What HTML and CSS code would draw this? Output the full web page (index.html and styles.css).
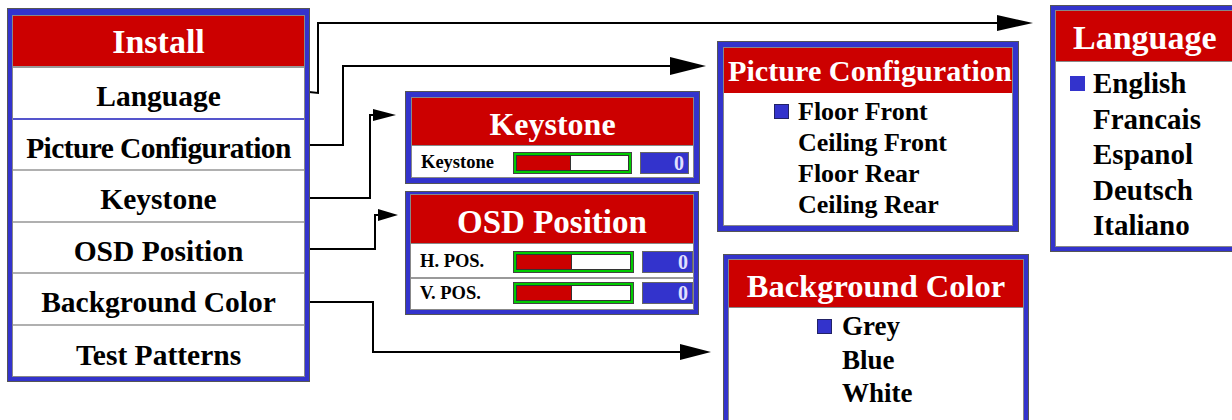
FILE: index.html
```html
<!DOCTYPE html>
<html lang="en">
  <head>
    <meta charset="UTF-8" />
    <title>Install Menu</title>
    <link rel="stylesheet" href="styles.css">
  </head>
  <body>
    <div id="canvas">
      <svg class="wires" width="1232" height="420" viewBox="0 0 1232 420">
        <polyline points="309,92 318,93 318,23 1000,23" />
        <polygon points="997,15 1033,23 997,31" />
        <polyline points="309,145 343,145 343,66 672,66" />
        <polygon points="670,57 706,66 670,75" />
        <polyline points="309,198 370,198 370,115 375,115" />
        <polygon points="373,109 396,115 373,121" />
        <polyline points="309,249 375,249 375,215 380,215" />
        <polygon points="378,209 398,215 378,221" />
        <polyline points="309,302 373,302 373,352 682,352" />
        <polygon points="680,344 711,352 680,360" />
      </svg>

      <!-- main menu -->
      <div class="box install">
        <div class="panel">
          <div class="head">Install</div>
          <div class="item first">Language</div>
          <div class="item tight">Picture Configuration</div>
          <div class="item">Keystone</div>
          <div class="item">OSD Position</div>
          <div class="item">Background Color</div>
          <div class="item last">Test Patterns</div>
        </div>
      </div>

      <div class="box keystone">
        <div class="panel">
          <div class="head">Keystone</div>
          <div class="slider">
            <span class="label">Keystone</span>
            <span class="bar"><span class="track"><span class="fill"></span></span></span>
            <span class="value">0</span>
          </div>
        </div>
      </div>

      <div class="box osd">
        <div class="panel">
          <div class="head">OSD Position</div>
          <div class="slider">
            <span class="label">H. POS.</span>
            <span class="bar"><span class="track"><span class="fill"></span></span></span>
            <span class="value">0</span>
          </div>
          <div class="slider">
            <span class="label">V. POS.</span>
            <span class="bar"><span class="track"><span class="fill"></span></span></span>
            <span class="value">0</span>
          </div>
        </div>
      </div>

      <div class="box picture">
        <div class="panel">
          <div class="head">Picture Configuration</div>
          <ul class="choices">
            <li><span class="mark on"></span>Floor Front</li>
            <li><span class="mark"></span>Ceiling Front</li>
            <li><span class="mark"></span>Floor Rear</li>
            <li><span class="mark"></span>Ceiling Rear</li>
          </ul>
        </div>
      </div>

      <div class="box language">
        <div class="panel">
          <div class="head">Language</div>
          <ul class="choices">
            <li><span class="mark on"></span>English</li>
            <li><span class="mark"></span>Francais</li>
            <li><span class="mark"></span>Espanol</li>
            <li><span class="mark"></span>Deutsch</li>
            <li><span class="mark"></span>Italiano</li>
          </ul>
        </div>
      </div>

      <div class="box background">
        <div class="panel">
          <div class="head">Background Color</div>
          <ul class="choices">
            <li><span class="mark on"></span>Grey</li>
            <li><span class="mark"></span>Blue</li>
            <li><span class="mark"></span>White</li>
          </ul>
        </div>
      </div>
    </div>
  </body>
</html>
```

FILE: styles.css
```css
body {
  margin: 0;
  background: #ffffff;
  font-family: "Liberation Serif", "Times New Roman", serif;
  font-weight: bold;
  color: #000000;
}
#canvas {
  position: relative;
  width: 1232px;
  height: 420px;
  overflow: hidden;
}
.wires {
  position: absolute;
  left: 0;
  top: 0;
}
.wires polyline {
  fill: none;
  stroke: #000000;
  stroke-width: 2;
}
.wires polygon {
  fill: #000000;
}
.box {
  position: absolute;
  box-sizing: border-box;
  border: 4px solid #3333cc;
  box-shadow: 0 0 0 1px #555555;
  background: #3333cc;
}
.panel {
  box-sizing: border-box;
  height: 100%;
  border: 1px solid #888888;
  background: #ffffff;
  display: flex;
  flex-direction: column;
}
.head {
  box-sizing: border-box;
  background: #cc0000;
  color: #ffffff;
  text-align: center;
  border-bottom: 1px solid #888888;
  display: flex;
  align-items: center;
  justify-content: center;
  white-space: nowrap;
  flex-shrink: 0;
  padding-top: 5px;
}

/* install */
.install {
  left: 8px;
  top: 9px;
  width: 301px;
  height: 372px;
  border-width: 6px 4px 4px 4px;
}
.install .head {
  height: 52px;
  font-size: 34px;
  padding-top: 2px;
  border-bottom: 2px solid #999999;
}
.install .item {
  box-sizing: border-box;
  height: 51.5px;
  padding-top: 8px;
  display: flex;
  align-items: center;
  justify-content: center;
  white-space: nowrap;
  font-size: 29.5px;
  border-bottom: 2px solid #b0b0b0;
  flex-shrink: 0;
}
.install .first {
  border-bottom-color: #5555cc;
}
.install .tight {
  letter-spacing: -0.6px;
}
.install .last {
  border-bottom: none;
}

/* sliders */
.keystone {
  left: 406px;
  top: 92px;
  width: 293px;
  height: 91px;
  border-width: 5px;
}
.keystone .head {
  height: 48px;
  font-size: 32px;
  padding-top: 6px;
}
.osd {
  left: 406px;
  top: 192px;
  width: 292px;
  height: 122px;
  border-width: 2px 4px 4px 4px;
}
.osd .head {
  height: 49px;
  font-size: 33px;
  padding-top: 7px;
}
.slider {
  box-sizing: border-box;
  height: 31px;
  display: flex;
  align-items: center;
  padding: 2px 0 0 9px;
  font-size: 18.5px;
}
.osd .slider {
  height: 33px;
}
.osd .slider + .slider {
  height: 30px;
  padding-top: 0;
  border-top: 2px solid #999999;
}
.label {
  width: 92px;
  white-space: nowrap;
}
.osd .label {
  width: 93px;
}
.bar {
  box-sizing: border-box;
  width: 119px;
  height: 22px;
  border: 1px solid #444444;
  background: #00cc00;
  padding: 2px;
  display: flex;
}
.osd .bar {
  width: 121px;
}
.track {
  flex: 1;
  border: 1px solid #333333;
  background: #ffffff;
  display: flex;
}
.fill {
  width: 48%;
  background: #cc0000;
  border-right: 1px solid #333333;
}
.value {
  box-sizing: border-box;
  width: 49px;
  height: 22px;
  margin-left: 8px;
  background: #3333cc;
  border: 1px solid #666666;
  color: #e0e0ff;
  text-align: right;
  padding-right: 4px;
  font-size: 20px;
  line-height: 20px;
}
.osd .value {
  width: 51px;
}

/* option lists */
.choices {
  list-style: none;
  margin: 0;
  padding: 0;
}
.choices li {
  display: flex;
  align-items: center;
  white-space: nowrap;
}
.mark {
  box-sizing: border-box;
  width: 15px;
  height: 15px;
  flex-shrink: 0;
}
.mark.on {
  background: #3333cc;
  border: 1px solid #222266;
}
.picture {
  left: 718px;
  top: 42px;
  width: 300px;
  height: 189px;
  border-width: 5px;
}
.picture .head {
  height: 45px;
  font-size: 30.2px;
  border-bottom: none;
  justify-content: flex-start;
  padding: 2px 0 0 4px;
}
.picture .choices {
  padding: 3px 0 0 50px;
  font-size: 26px;
}
.picture li {
  height: 31px;
}
.picture .mark {
  margin-right: 9px;
}
.language {
  left: 1051px;
  top: 6px;
  width: 200px;
  height: 245px;
}
.language .head {
  height: 51px;
  font-size: 34px;
  justify-content: flex-start;
  padding: 4px 0 0 17px;
}
.language .choices {
  padding: 4px 0 0 14px;
  font-size: 29px;
}
.language li {
  height: 35.5px;
}
.language .mark {
  margin-right: 8px;
}
.language .mark.on {
  border-color: #3333cc;
}
.background {
  left: 724px;
  top: 255px;
  width: 304px;
  height: 200px;
}
.background .head {
  height: 48px;
  font-size: 32.5px;
  padding-top: 5px;
}
.background .choices {
  padding: 2px 0 0 88px;
  font-size: 27px;
}
.background li {
  height: 33.5px;
}
.background .mark {
  margin-right: 10px;
}
```
